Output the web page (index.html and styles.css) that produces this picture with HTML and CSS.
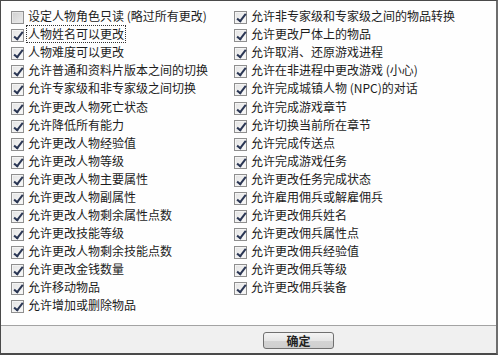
FILE: index.html
```html
<!DOCTYPE html>
<html lang="zh-CN">
<head>
  <meta charset="UTF-8"/>
  <title>选项</title>
  <link rel="stylesheet" href="styles.css">
</head>
<body>
  <div class="dialog">
    <div class="options">
      <div class="col">
        <div class="group">
          <label class="opt"><span class="cb off"></span><span class="txt">设定人物角色只读 (略过所有更改)</span></label>
          <label class="opt"><span class="cb"></span><span class="txt focus">人物姓名可以更改</span></label>
          <label class="opt"><span class="cb"></span><span class="txt">人物难度可以更改</span></label>
          <label class="opt"><span class="cb"></span><span class="txt">允许普通和资料片版本之间的切换</span></label>
          <label class="opt"><span class="cb"></span><span class="txt">允许专家级和非专家级之间切换</span></label>
        </div>
        <div class="group">
          <label class="opt"><span class="cb"></span><span class="txt">允许更改人物死亡状态</span></label>
          <label class="opt"><span class="cb"></span><span class="txt">允许降低所有能力</span></label>
          <label class="opt"><span class="cb"></span><span class="txt">允许更改人物经验值</span></label>
          <label class="opt"><span class="cb"></span><span class="txt">允许更改人物等级</span></label>
          <label class="opt"><span class="cb"></span><span class="txt">允许更改人物主要属性</span></label>
          <label class="opt"><span class="cb"></span><span class="txt">允许更改人物副属性</span></label>
          <label class="opt"><span class="cb"></span><span class="txt">允许更改人物剩余属性点数</span></label>
          <label class="opt"><span class="cb"></span><span class="txt">允许更改技能等级</span></label>
          <label class="opt"><span class="cb"></span><span class="txt">允许更改人物剩余技能点数</span></label>
          <label class="opt"><span class="cb"></span><span class="txt">允许更改金钱数量</span></label>
          <label class="opt"><span class="cb"></span><span class="txt">允许移动物品</span></label>
          <label class="opt"><span class="cb"></span><span class="txt">允许增加或删除物品</span></label>
        </div>
      </div>
      <div class="col">
        <div class="group">
          <label class="opt"><span class="cb"></span><span class="txt">允许非专家级和专家级之间的物品转换</span></label>
          <label class="opt"><span class="cb"></span><span class="txt">允许更改尸体上的物品</span></label>
          <label class="opt"><span class="cb"></span><span class="txt">允许取消、还原游戏进程</span></label>
          <label class="opt"><span class="cb"></span><span class="txt">允许在非进程中更改游戏 (小心)</span></label>
          <label class="opt"><span class="cb"></span><span class="txt">允许完成城镇人物 (NPC)的对话</span></label>
        </div>
        <div class="group">
          <label class="opt"><span class="cb"></span><span class="txt">允许完成游戏章节</span></label>
          <label class="opt"><span class="cb"></span><span class="txt">允许切换当前所在章节</span></label>
          <label class="opt"><span class="cb"></span><span class="txt">允许完成传送点</span></label>
          <label class="opt"><span class="cb"></span><span class="txt">允许完成游戏任务</span></label>
          <label class="opt"><span class="cb"></span><span class="txt">允许更改任务完成状态</span></label>
          <label class="opt"><span class="cb"></span><span class="txt">允许雇用佣兵或解雇佣兵</span></label>
          <label class="opt"><span class="cb"></span><span class="txt">允许更改佣兵姓名</span></label>
          <label class="opt"><span class="cb"></span><span class="txt">允许更改佣兵属性点</span></label>
          <label class="opt"><span class="cb"></span><span class="txt">允许更改佣兵经验值</span></label>
          <label class="opt"><span class="cb"></span><span class="txt">允许更改佣兵等级</span></label>
          <label class="opt"><span class="cb"></span><span class="txt">允许更改佣兵装备</span></label>
        </div>
      </div>
    </div>
    <div class="footer">
      <button class="btn">确定</button>
    </div>
  </div>
</body>
</html>
```

FILE: styles.css
```css
* { margin:0; padding:0; box-sizing:border-box; }
body {
  background:#fff;
  font-family:"Noto Sans CJK SC", "Noto Sans", sans-serif;
  font-size:12px; color:#1c1c1c;
}
.dialog {
  width:498px; height:355px;
  display:flex; flex-direction:column;
  border-left:1px solid #4a4a4a; border-top:1px solid #4a4a4a;
  border-right:2px solid #6e6e6e; border-bottom:2px solid #4a4a4a;
  background:#fefefe;
}
.options {
  flex:1; display:grid; grid-template-columns:223px 1fr;
  padding:6px 0 0 10px;
}
.group { display:flex; flex-direction:column; margin-bottom:1px; }
.opt {
  height:18px; display:flex; align-items:center; gap:3px;
  white-space:nowrap;
}
.cb {
  position:relative; width:13px; height:13px; margin-top:2px;
  border:1px solid #8f8f8f;
  background:linear-gradient(135deg, #e3e3e3, #fafafa);
  box-shadow:inset 0 0 0 1px #f4f4f4;
}
.cb::after {
  content:""; position:absolute; left:4px; top:0px;
  width:3px; height:8px;
  border-right:2px solid #2a3654; border-bottom:2px solid #2a3654;
  transform:rotate(38deg);
}
.cb.off {
  background:linear-gradient(135deg, #cfcfcf, #ececec);
  box-shadow:inset 0 0 0 1px #e6e6e6;
}
.cb.off::after { display:none; }
.txt { line-height:16px; padding:0 1px; }
.txt.focus { outline:1px dotted #333; }
.footer {
  height:28px; background:#f0f0f0;
  border-top:1px solid #a3a3a3;
  display:flex; align-items:center;
  padding-left:262px;
}
.btn {
  width:71px; height:17px;
  font-family:inherit; font-size:12px; font-weight:bold; color:#222;
  border:1px solid #707070; border-radius:3px;
  background:linear-gradient(#f4f4f4, #e6e6e6 50%, #d4d4d4 51%, #cfcfcf);
  line-height:13px; margin-top:2px;
}
```
